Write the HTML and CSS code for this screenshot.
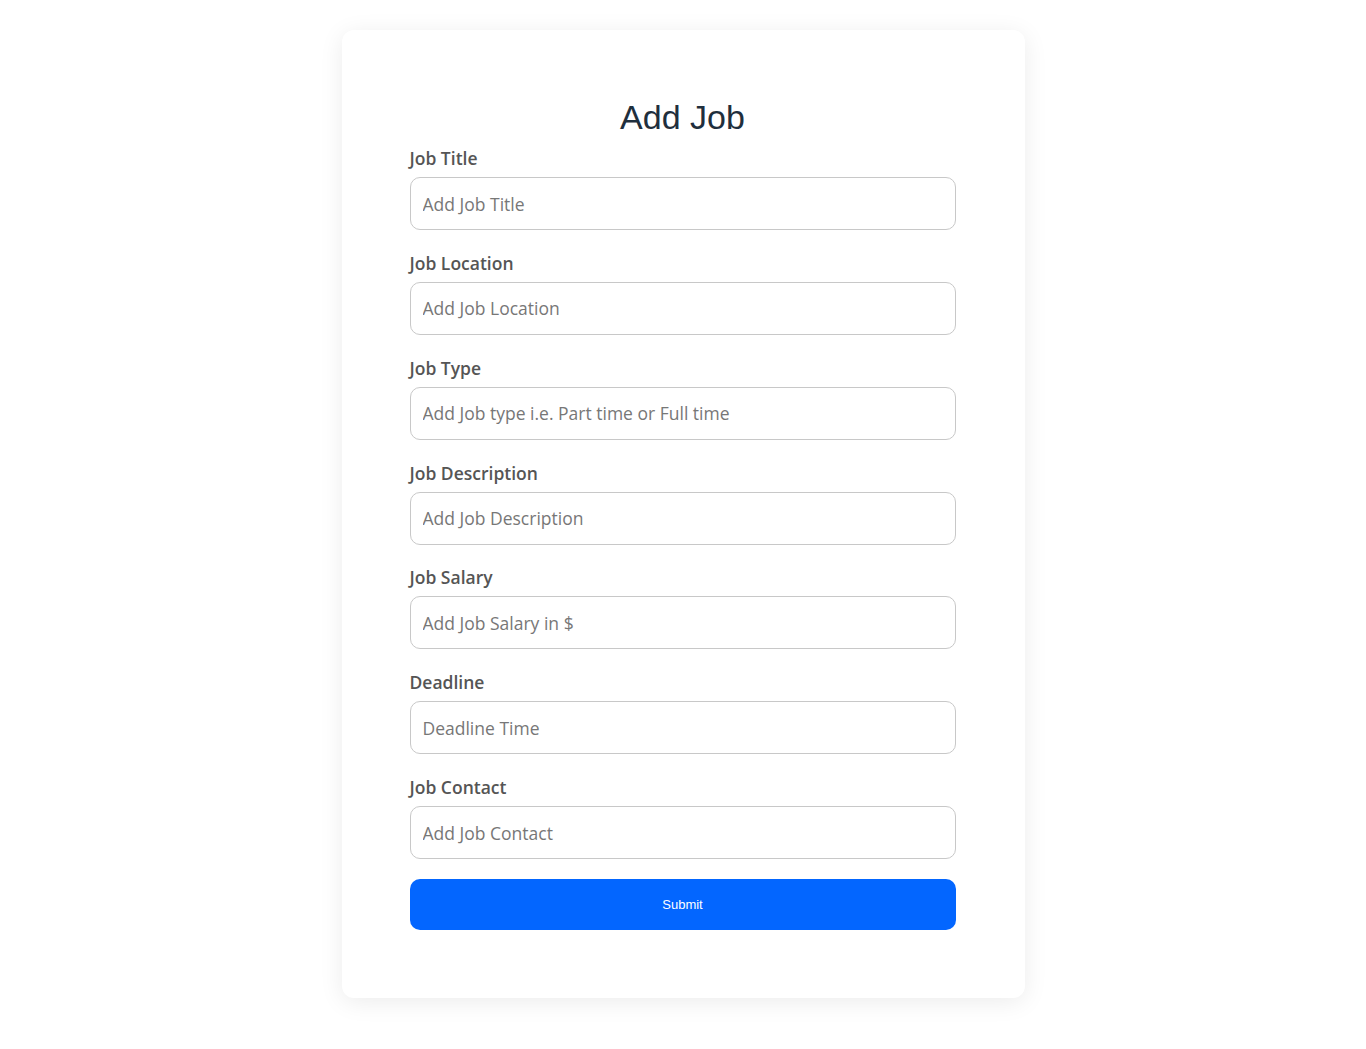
FILE: index.html
```html
<!DOCTYPE html>
<html>
<head>
<meta charset="utf-8">
<link rel="stylesheet" href="styles.css">
</head>
<body>
<div class="page">
  <form class="card">
    <h1 class="title">Add Job</h1>
    <div class="field">
      <label class="label">Job Title</label>
      <input class="input" placeholder="Add Job Title">
    </div>
    <div class="field">
      <label class="label">Job Location</label>
      <input class="input" placeholder="Add Job Location">
    </div>
    <div class="field">
      <label class="label">Job Type</label>
      <input class="input" placeholder="Add Job type i.e. Part time or Full time">
    </div>
    <div class="field">
      <label class="label">Job Description</label>
      <input class="input" placeholder="Add Job Description">
    </div>
    <div class="field">
      <label class="label">Job Salary</label>
      <input class="input" placeholder="Add Job Salary in $">
    </div>
    <div class="field">
      <label class="label">Deadline</label>
      <input class="input" placeholder="Deadline Time">
    </div>
    <div class="field">
      <label class="label">Job Contact</label>
      <input class="input" placeholder="Add Job Contact">
    </div>
    <button type="button" class="submit">Submit</button>
  </form>
</div>
</body>
</html>
```
FILE: styles.css
```css
* { box-sizing: border-box; }
html, body { margin: 0; padding: 0; background: #fff; }
body { font-family: "Open Sans", "Noto Sans", sans-serif; }
.page {
  padding: 30px 0 51px;
  display: flex;
  justify-content: center;
}
.card {
  width: 683px;
  background: #fff;
  border-radius: 12px;
  box-shadow: 0 4px 24px rgba(0,0,0,0.08);
  padding: 66px 69px 68px 68px;
  display: flex;
  flex-direction: column;
}
.title {
  margin: 0;
  font-family: "Liberation Sans", Arial, sans-serif;
  font-weight: 400;
  font-size: 34px;
  line-height: 42px;
  text-align: center;
  color: #1f2f3d;
}
.field {
  display: flex;
  flex-direction: column;
  margin-top: 8px;
}
.field + .field { margin-top: 20.85px; }
.label {
  font-size: 17.5px;
  font-weight: 600;
  color: #555;
  line-height: 24px;
  margin-bottom: 7px;
}
.input {
  height: 53px;
  border: 1px solid #c8c8c8;
  border-radius: 10px;
  padding: 0 12px;
  font-family: "Open Sans", "Noto Sans", sans-serif;
  font-size: 17.5px;
  color: #333;
  outline: none;
}
.input::placeholder { color: #777; }
.submit {
  margin-top: 20px;
  height: 51px;
  border: none;
  border-radius: 10px;
  background: #0366ff;
  color: #fff;
  font-family: "Liberation Sans", Arial, sans-serif;
  font-size: 13px;
  cursor: pointer;
}
```
